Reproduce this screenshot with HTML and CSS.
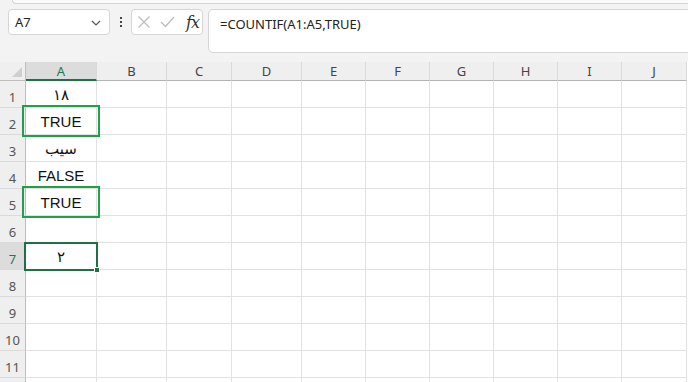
FILE: index.html
```html
<!DOCTYPE html>
<html>

<head>
    <meta charset="utf-8" />
    <title>Sheet</title>
    <link rel="stylesheet" href="styles.css">
</head>

<body>
    <div class="ribbon"></div>
    <div class="bar">
        <div class="namebox">
            <span>A7</span>
            <svg class="chev" width="10" height="6" viewBox="0 0 10 6"><path d="M1 1l4 4 4-4" fill="none" stroke="#555" stroke-width="1.2"/></svg>
        </div>
        <div class="dots"><i></i><i></i><i></i></div>
        <div class="fxbox">
            <svg width="14" height="14" viewBox="0 0 14 14"><path d="M1.5 1.5l11 11M12.5 1.5l-11 11" stroke="#bdbdbd" stroke-width="1.3"/></svg>
            <svg width="15" height="12" viewBox="0 0 15 12"><path d="M1 6l4.5 4.5L14 1" fill="none" stroke="#bdbdbd" stroke-width="1.3"/></svg>
            <span class="fx">fx</span>
        </div>
        <div class="formula">=COUNTIF(A1:A5,TRUE)</div>
    </div>

    <div class="sheet">
        <div class="corner"><b></b></div>
        <div class="ch sel">A</div>
        <div class="ch">B</div>
        <div class="ch">C</div>
        <div class="ch">D</div>
        <div class="ch">E</div>
        <div class="ch">F</div>
        <div class="ch">G</div>
        <div class="ch">H</div>
        <div class="ch">I</div>
        <div class="ch">J</div>

        <div class="rh">1</div><div class="c">۱۸</div><div class="c"></div><div class="c"></div><div class="c"></div><div class="c"></div><div class="c"></div><div class="c"></div><div class="c"></div><div class="c"></div><div class="c"></div>
        <div class="rh">2</div><div class="c">TRUE</div><div class="c"></div><div class="c"></div><div class="c"></div><div class="c"></div><div class="c"></div><div class="c"></div><div class="c"></div><div class="c"></div><div class="c"></div>
        <div class="rh">3</div><div class="c">سیب</div><div class="c"></div><div class="c"></div><div class="c"></div><div class="c"></div><div class="c"></div><div class="c"></div><div class="c"></div><div class="c"></div><div class="c"></div>
        <div class="rh">4</div><div class="c">FALSE</div><div class="c"></div><div class="c"></div><div class="c"></div><div class="c"></div><div class="c"></div><div class="c"></div><div class="c"></div><div class="c"></div><div class="c"></div>
        <div class="rh">5</div><div class="c">TRUE</div><div class="c"></div><div class="c"></div><div class="c"></div><div class="c"></div><div class="c"></div><div class="c"></div><div class="c"></div><div class="c"></div><div class="c"></div>
        <div class="rh">6</div><div class="c"></div><div class="c"></div><div class="c"></div><div class="c"></div><div class="c"></div><div class="c"></div><div class="c"></div><div class="c"></div><div class="c"></div><div class="c"></div>
        <div class="rh sel">7</div><div class="c">۲</div><div class="c"></div><div class="c"></div><div class="c"></div><div class="c"></div><div class="c"></div><div class="c"></div><div class="c"></div><div class="c"></div><div class="c"></div>
        <div class="rh">8</div><div class="c"></div><div class="c"></div><div class="c"></div><div class="c"></div><div class="c"></div><div class="c"></div><div class="c"></div><div class="c"></div><div class="c"></div><div class="c"></div>
        <div class="rh">9</div><div class="c"></div><div class="c"></div><div class="c"></div><div class="c"></div><div class="c"></div><div class="c"></div><div class="c"></div><div class="c"></div><div class="c"></div><div class="c"></div>
        <div class="rh">10</div><div class="c"></div><div class="c"></div><div class="c"></div><div class="c"></div><div class="c"></div><div class="c"></div><div class="c"></div><div class="c"></div><div class="c"></div><div class="c"></div>
        <div class="rh">11</div><div class="c"></div><div class="c"></div><div class="c"></div><div class="c"></div><div class="c"></div><div class="c"></div><div class="c"></div><div class="c"></div><div class="c"></div><div class="c"></div>
        <div class="rh"></div><div class="c"></div><div class="c"></div><div class="c"></div><div class="c"></div><div class="c"></div><div class="c"></div><div class="c"></div><div class="c"></div><div class="c"></div><div class="c"></div>

        <div class="mark m2"></div>
        <div class="mark m5"></div>
        <div class="cursor"><b></b></div>
    </div>
</body>

</html>
```

FILE: styles.css
```css
* {
    margin: 0;
    padding: 0;
    box-sizing: border-box;
}

html,
body {
    width: 688px;
    height: 382px;
    overflow: hidden;
}

body {
    background: #f3f3f3;
    font-family: 'Noto Sans', 'DejaVu Sans', sans-serif;
    font-size: 13px;
    color: #222;
}

.ribbon {
    height: 4px;
    margin-left: 12px;
    background: #fafafa;
    border-bottom: 1px solid #d4d4d4;
    border-left: 1px solid #d4d4d4;
    border-bottom-left-radius: 6px;
}

.bar {
    display: flex;
    align-items: flex-start;
    padding: 5px 0 0 8px;
    height: 49px;
}

.namebox {
    width: 102px;
    height: 26px;
    background: #fff;
    border: 1px solid #d6d6d6;
    border-radius: 4px;
    display: flex;
    align-items: center;
    justify-content: space-between;
    padding: 0 8px 0 6px;
    color: #222;
}

.namebox .chev {
    margin-top: 1px;
}

.dots {
    width: 21px;
    height: 26px;
    display: flex;
    flex-direction: column;
    align-items: center;
    justify-content: center;
    gap: 2px;
}

.dots i {
    width: 2px;
    height: 2px;
    background: #444;
    display: block;
}

.fxbox {
    width: 72px;
    height: 26px;
    background: #fff;
    border: 1px solid #d6d6d6;
    border-radius: 4px;
    display: flex;
    align-items: center;
    padding-left: 5px;
    gap: 9px;
}

.fx {
    font-family: 'DejaVu Serif', 'Liberation Serif', serif;
    font-style: italic;
    font-size: 16px;
    color: #333;
    margin-left: 2px;
    letter-spacing: -1px;
}

.formula {
    flex: 1;
    margin-left: 5px;
    margin-right: -6px;
    height: 44px;
    background: #fff;
    border: 1px solid #d6d6d6;
    border-radius: 5px 0 0 5px;
    padding: 4px 0 0 11px;
    line-height: 20px;
    color: #222;
}

.sheet {
    position: relative;
    margin-top: 9px;
    display: grid;
    grid-template-columns: 26px 71px 70px 65px 70px 64px 64px 64px 64px 64px 65px;
    grid-template-rows: 19px repeat(12, 27px);
    background: #fff;
}

.corner {
    background: #efefef;
    border-right: 1px solid #bdbdbd;
    border-bottom: 1px solid #bdbdbd;
    position: relative;
}

.corner b {
    position: absolute;
    right: 3px;
    bottom: 3px;
    width: 10px;
    height: 10px;
    background: #cfcfcf;
    clip-path: polygon(100% 0, 100% 100%, 0 100%);
}

.ch {
    background: #efefef;
    border-right: 1px solid #dadada;
    border-bottom: 1px solid #b4b4b4;
    text-align: center;
    line-height: 18px;
    color: #444;
}

.ch.sel {
    background: #dcdcdc;
    color: #1b7a4c;
    border-bottom: 2px solid #1e7145;
}

.rh {
    background: #efefef;
    border-right: 1px solid #bdbdbd;
    border-bottom: 1px solid #dadada;
    text-align: center;
    padding-top: 6px;
    line-height: 20px;
    color: #555;
}

.rh.sel {
    background: #dcdcdc;
    color: #1b7a4c;
}

.c {
    border-right: 1px solid #e1e1e1;
    border-bottom: 1px solid #e1e1e1;
    display: flex;
    align-items: center;
    justify-content: center;
    padding-top: 1px;
    font-family: 'Liberation Sans', 'DejaVu Sans', sans-serif;
    font-size: 15px;
    color: #111;
}

.mark {
    position: absolute;
    left: 22px;
    width: 78px;
    height: 32px;
    border: 2px solid #21a04b;
}

.m2 {
    top: 43px;
}

.m5 {
    top: 124px;
}

.cursor {
    position: absolute;
    left: 24px;
    top: 180px;
    width: 74px;
    height: 29px;
    border: 2px solid #1e7145;
}

.cursor b {
    position: absolute;
    right: -4px;
    bottom: -4px;
    width: 6px;
    height: 6px;
    background: #1e7145;
    border: 1px solid #fff;
}
```
